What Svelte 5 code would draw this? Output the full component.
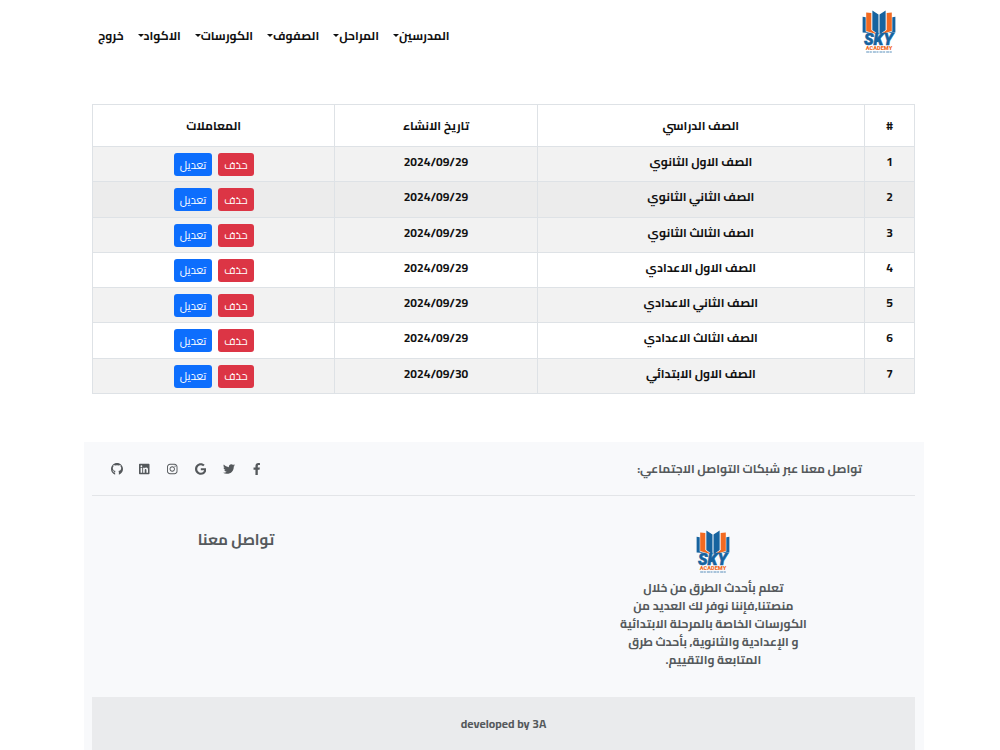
<script lang="ts">
    const menus: { label: string; dropdown: boolean }[] = [
        { label: "المدرسين", dropdown: true },
        { label: "المراحل", dropdown: true },
        { label: "الصفوف", dropdown: true },
        { label: "الكورسات", dropdown: true },
        { label: "الاكواد", dropdown: true },
        { label: "خروج", dropdown: false },
    ];

    let grades = $state([
        { id: 1, name: "الصف الاول الثانوي", date: "2024/09/29" },
        { id: 2, name: "الصف الثاني الثانوي", date: "2024/09/29" },
        { id: 3, name: "الصف الثالث الثانوي", date: "2024/09/29" },
        { id: 4, name: "الصف الاول الاعدادي", date: "2024/09/29" },
        { id: 5, name: "الصف الثاني الاعدادي", date: "2024/09/29" },
        { id: 6, name: "الصف الثالث الاعدادي", date: "2024/09/29" },
        { id: 7, name: "الصف الاول الابتدائي", date: "2024/09/30" },
    ]);

    let active = $state(2);

    const about = [
        "تعلم بأحدث الطرق من خلال",
        "منصتنا,فإننا نوفر لك العديد من",
        "الكورسات الخاصة بالمرحلة الابتدائية",
        "و الإعدادية والثانوية, بأحدث طرق",
        "المتابعة والتقييم.",
    ];

    const socials = [
        { name: "Facebook", box: "0 0 320 512", path: "M279.14 288l14.22-92.66h-88.91v-60.13c0-25.35 12.42-50.06 52.24-50.06h40.42V6.26S260.43 0 225.36 0c-73.22 0-121.08 44.38-121.08 124.72v70.62H22.89V288h81.39v224h100.17V288z" },
        { name: "Twitter", box: "0 0 512 512", path: "M459.37 151.716c.325 4.548.325 9.097.325 13.645 0 138.72-105.583 298.558-298.558 298.558-59.452 0-114.68-17.219-161.137-47.106 8.447.974 16.568 1.299 25.34 1.299 49.055 0 94.213-16.568 130.274-44.832-46.132-.975-84.792-31.188-98.112-72.772 6.498.974 12.995 1.624 19.818 1.624 9.421 0 18.843-1.3 27.614-3.573-48.081-9.747-84.143-51.98-84.143-102.985v-1.299c13.969 7.797 30.214 12.67 47.431 13.319-28.264-18.843-46.781-51.005-46.781-87.391 0-19.492 5.197-37.36 14.294-52.954 51.655 63.675 129.3 105.258 216.365 109.807-1.624-7.797-2.599-15.918-2.599-24.04 0-57.828 46.782-104.934 104.934-104.934 30.213 0 57.502 12.67 76.67 33.137 23.715-4.548 46.456-13.32 66.599-25.34-7.798 24.366-24.366 44.833-46.132 57.827 21.117-2.273 41.584-8.122 60.426-16.243-14.292 20.791-32.161 39.308-52.628 54.253z" },
        { name: "Google", box: "0 0 488 512", path: "M488 261.8C488 403.3 391.1 504 248 504 110.8 504 0 393.2 0 256S110.8 8 248 8c66.8 0 123 24.5 166.3 64.9l-67.5 64.9C258.5 52.6 94.3 116.6 94.3 256c0 86.5 69.1 156.6 153.7 156.6 98.2 0 135-70.4 140.8-106.9H248v-85.3h236.1c2.3 12.7 3.9 24.9 3.9 41.4z" },
        { name: "Instagram", box: "0 0 448 512", path: "M224.1 141c-63.6 0-114.9 51.3-114.9 114.9s51.3 114.9 114.9 114.9S339 319.5 339 255.9 287.7 141 224.1 141zm0 189.6c-41.1 0-74.7-33.5-74.7-74.7s33.5-74.7 74.7-74.7 74.7 33.5 74.7 74.7-33.6 74.7-74.7 74.7zm146.4-194.3c0 14.9-12 26.8-26.8 26.8-14.9 0-26.8-12-26.8-26.8s12-26.8 26.8-26.8 26.8 12 26.8 26.8zm76.1 27.2c-1.7-35.9-9.9-67.7-36.2-93.9-26.2-26.2-58-34.4-93.9-36.2-37-2.1-147.9-2.1-184.9 0-35.8 1.7-67.6 9.9-93.9 36.1s-34.4 58-36.2 93.9c-2.1 37-2.1 147.9 0 184.9 1.7 35.9 9.9 67.7 36.2 93.9s58 34.4 93.9 36.2c37 2.1 147.9 2.1 184.9 0 35.9-1.7 67.7-9.9 93.9-36.2 26.2-26.2 34.4-58 36.2-93.9 2.1-37 2.1-147.8 0-184.8zM398.8 388c-7.8 19.6-22.9 34.7-42.6 42.6-29.5 11.7-99.5 9-132.1 9s-102.7 2.6-132.1-9c-19.6-7.8-34.7-22.9-42.6-42.6-11.7-29.5-9-99.5-9-132.1s-2.6-102.7 9-132.1c7.8-19.6 22.9-34.7 42.6-42.6 29.5-11.7 99.5-9 132.1-9s102.7-2.6 132.1 9c19.6 7.8 34.7 22.9 42.6 42.6 11.7 29.5 9 99.5 9 132.1s2.7 102.7-9 132.1z" },
        { name: "LinkedIn", box: "0 0 448 512", path: "M416 32H31.9C14.3 32 0 46.5 0 64.3v383.4C0 465.5 14.3 480 31.9 480H416c17.6 0 32-14.5 32-32.3V64.3c0-17.8-14.4-32.3-32-32.3zM135.4 416H69V202.2h66.5V416zm-33.2-243c-21.3 0-38.5-17.3-38.5-38.5S80.9 96 102.2 96c21.2 0 38.5 17.3 38.5 38.5 0 21.3-17.2 38.5-38.5 38.5zm282.1 243h-66.4V312c0-24.8-.5-56.7-34.5-56.7-34.6 0-39.9 27-39.9 54.9V416h-66.4V202.2h63.7v29.2h.9c8.9-16.8 30.6-34.5 62.9-34.5 67.2 0 79.7 44.3 79.7 101.9V416z" },
        { name: "GitHub", box: "0 0 16 16", path: "M8 0C3.6 0 0 3.6 0 8c0 3.5 2.3 6.5 5.5 7.6v-3.1c-1.9.3-2.5-.5-2.8-1.2-.2-.4-.5-.8-.9-1.1 1-.3 1.6.6 1.9 1 .5.8 1.2.9 1.9.6.1-.5.3-.8.6-1-2.1-.3-3.8-1.2-3.8-4 0-.9.3-1.7.9-2.3-.2-.6-.2-1.3.1-2 .8 0 1.5.4 2.2.9a8 8 0 0 1 4.8 0c.7-.5 1.4-.9 2.2-.9.3.7.3 1.4.1 2 .6.6.9 1.4.9 2.3 0 2.8-1.7 3.7-3.8 4 .4.3.7.9.7 1.8v3C13.700 14.500 16 11.500 16 8c0-4.400-3.600-8-8-8z" },
    ];
</script>

{#snippet logo()}
    <svg class="logo" viewBox="0 0 66 84" role="img" aria-label="Sky Academy">
        <g fill="#16639f">
            <path d="M1 13l6 1v28l9 3-15-1z" />
            <path d="M20 1l12 8v39l-12-9z" />
            <path d="M46 1L34 9v39l12-9z" />
            <path d="M65 13l-6 1v28l-9 3 15-1z" />
        </g>
        <g fill="#f26a21">
            <path d="M8 5l10 1v33l12 9-22-7z" />
            <path d="M58 5l-10 1v33l-12 9 22-7z" />
        </g>
        <text class="logo-name" x="32" y="69">SKY</text>
        <text class="logo-sub" x="33" y="79">ACADEMY</text>
        <path d="M8 82h50" stroke="#16639f" stroke-width="2" stroke-dasharray="6 1 4 2" opacity="0.7" />
    </svg>
{/snippet}

<div class="page" dir="rtl" lang="ar">
    <header>
        <a class="brand" href="#home">{@render logo()}</a>
        <nav>
            {#each menus as item}
                <a href="#menu" class:dropdown={item.dropdown}>{item.label}</a>
            {/each}
        </nav>
    </header>

    <main>
        <table>
            <thead>
                <tr>
                    <th class="col-id">#</th>
                    <th class="col-name">الصف الدراسي</th>
                    <th class="col-date">تاريخ الانشاء</th>
                    <th>المعاملات</th>
                </tr>
            </thead>
            <tbody>
                {#each grades as grade (grade.id)}
                    <tr class:active={grade.id === active} onmouseenter={() => (active = grade.id)}>
                        <td>{grade.id}</td>
                        <td>{grade.name}</td>
                        <td>{grade.date}</td>
                        <td>
                            <div class="actions">
                                <button class="delete">حذف</button>
                                <button class="edit">تعديل</button>
                            </div>
                        </td>
                    </tr>
                {/each}
            </tbody>
        </table>
    </main>

    <footer>
        <section class="social">
            <span>تواصل معنا عبر شبكات التواصل الاجتماعي:</span>
            <div class="icons">
                {#each socials as social}
                    <a href="#social" aria-label={social.name}>
                        <svg viewBox={social.box}><path d={social.path} /></svg>
                    </a>
                {/each}
            </div>
        </section>
        <section class="info">
            <div class="about">
                {@render logo()}
                <p>
                    {#each about as line}
                        <span>{line}</span>
                    {/each}
                </p>
            </div>
            <h6>تواصل معنا</h6>
        </section>
        <div class="credit" dir="ltr">developed by 3A</div>
    </footer>
</div>

<style>
    :global(body) {
        background-color: #fff;
    }

    .page {
        padding: 0 76px 0 84px;
        font-family: Cairo, Roboto, "DejaVu Sans", sans-serif;
        font-size: 12px;
        font-weight: 700;
        line-height: 18px;
        color: #111;
    }

    a {
        color: inherit;
        text-decoration: none;
    }

    header {
        display: flex;
        align-items: center;
        justify-content: space-between;
        padding: 10px 28px 0 14px;
    }

    nav {
        display: flex;
        gap: 14px;
        padding-top: 8px;
    }

    .dropdown::after {
        content: "";
        display: inline-block;
        vertical-align: 3px;
        border-top: 3px solid;
        border-left: 3px solid transparent;
        border-right: 3px solid transparent;
    }

    .logo {
        display: block;
        width: 34px;
        height: 43px;
    }

    .logo-name {
        font: italic 900 31px Roboto, sans-serif;
        fill: #16639f;
        stroke: #16639f;
        stroke-width: 1px;
        text-anchor: middle;
    }

    .logo-sub {
        font: 900 11px Roboto, sans-serif;
        fill: #f26a21;
        text-anchor: middle;
    }

    main {
        padding: 51px 9px 48px 8px;
    }

    table {
        width: 100%;
        height: 290px;
        table-layout: fixed;
        border-collapse: collapse;
        text-align: center;
    }

    th,
    td {
        border: 1px solid #dee2e6;
        padding: 0;
    }

    th {
        height: 41px;
    }

    td {
        padding: 6px 0 5px;
        vertical-align: top;
    }

    .col-id {
        width: 49px;
    }

    .col-name {
        width: 39.7%;
    }

    .col-date {
        width: 24.5%;
    }

    tbody tr:nth-child(odd) {
        background-color: #f2f2f2;
    }

    tbody tr.active {
        background-color: #ececec;
    }

    .actions {
        display: flex;
        justify-content: center;
        gap: 6px;
    }

    button {
        height: 23px;
        padding: 0 6px;
        border: 0;
        border-radius: 3px;
        color: #fff;
        font-family: inherit;
        font-size: 11px;
        line-height: 22px;
        cursor: pointer;
    }

    .delete {
        background-color: #dc3545;
    }

    .edit {
        background-color: #0d6efd;
    }

    footer {
        padding: 0 9px 0 8px;
        background-color: #f8f9fb;
        color: #55595c;
    }

    .social {
        display: flex;
        align-items: center;
        justify-content: space-between;
        height: 53px;
        padding: 0 53px 0 18px;
        border-bottom: 1px solid #e3e5e8;
    }

    .icons {
        display: flex;
        gap: 15px;
    }

    .icons a {
        display: flex;
        justify-content: center;
        width: 13px;
    }

    .icons svg {
        height: 12px;
        fill: currentColor;
    }

    .info {
        display: grid;
        grid-template-columns: 49fr 16fr 35fr;
        padding: 34px 0 28px;
    }

    .about {
        display: flex;
        flex-direction: column;
        align-items: center;
        gap: 6px;
    }

    p {
        margin: 0;
        text-align: center;
    }

    p span {
        display: block;
        white-space: nowrap;
    }

    h6 {
        grid-column: 3;
        margin: 0;
        font-size: 15px;
        line-height: 20px;
        text-align: center;
    }

    .credit {
        padding: 18px;
        background-color: #eaebed;
        text-align: center;
    }
</style>
